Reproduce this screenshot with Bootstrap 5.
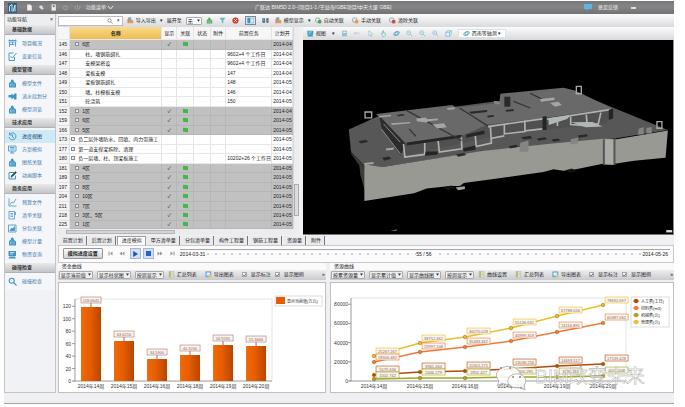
<!DOCTYPE html>
<html lang="zh-CN">
<head>
<meta charset="utf-8">
<meta name="viewport" content="width=device-width, initial-scale=1">
<title>广联达 BIM5D 2.0</title>
<link href="https://cdn.jsdelivr.net/npm/bootstrap@5.3.0/dist/css/bootstrap.min.css" rel="stylesheet">
<style>
body{font:5px/7px "Liberation Sans","Noto Sans CJK SC",sans-serif;color:#222;background:#fff}
svg{display:block;flex:none}
button,select,input{font:inherit;color:inherit}
.app{margin:1px 11px 0 4px;background:#f0f0f2;border-bottom:1px solid #a5a5a8;white-space:nowrap}
.titlebar{height:13px;background:linear-gradient(#777,#858587 40%,#727274);color:#eee;padding:0 38px 0 4px;gap:5px}
.titlebar .caption{margin-left:137px}
.plain{background:none;border:0;padding:0;display:inline-flex;align-items:center;gap:2px}
.side{width:53px;background:#f1f2f5;border:1px solid #c3c5c9;border-top:0}
.side-title{height:11px;padding:0 2px;background:#eceef0}
.side h2{height:10px;margin:0;padding:0 7px;font:bold 5px/9px "Liberation Sans","Noto Sans CJK SC",sans-serif;color:#333;background:linear-gradient(#e9e9ea,#c4c5c8);border-bottom:1px solid #b2b3b6}
.side ul{padding:2px 0;margin:0;background:#f4f6fa}
.side li a{height:13px;padding-left:3px;gap:5px;color:#477ca8;text-decoration:none}
.side li a.on{background:#cdeaf6;color:#173f66}
.side svg{width:9px;height:9px;color:#3c95c6}
.ico{width:7px;height:7px}
.main-area{min-width:0;padding-left:2px}
.toolbar{height:13px;background:linear-gradient(#fbfbfb,#d9dadd);padding-right:4px}
.gap-6px{gap:6px}
.find{width:65px;height:10px;background:#fff;border:1px solid #b9bbc0}
.find input{width:48px;border:0;padding:0;outline:0}
.drop{height:8px;padding:0 4px 0 1px;font-size:5px;line-height:6px;border:1px solid #a9abb0;border-radius:1px;color:#222;background-color:#eee;
 background-image:url("data:image/svg+xml,%3csvg xmlns='http://www.w3.org/2000/svg' viewBox='0 0 4 3'%3e%3cpath d='M0 0h4L2 3z' fill='%23333'/%3e%3c/svg%3e");background-size:3px 3px;background-position:right 1px center;background-repeat:no-repeat}
.w5{width:34px}.w4{width:29px}.w1{width:16px;background-color:#fff}
.pressed{border:1px solid #7e8795;background:#d3e3ef;padding:0 1px}
.plan{width:241px;background:#fff}
.plan table{width:235px;table-layout:fixed;border-collapse:collapse}
.plan th,.plan td{padding:0 1px;overflow:hidden;border-right:1px solid #e3e4e7;border-bottom:1px solid #e8e8ea;line-height:6px}
.plan th{height:12px;font-weight:400;text-align:center;background:#f6f6f7}
.plan th.hot{background:linear-gradient(#f9d98a,#eebd52);font-weight:700}
.plan tbody tr{height:10px}.plan tbody tr:nth-child(even){height:9px}.plan tbody tr:last-child{height:8px}
.plan tr.zone td{background:#c1c1c2;border-color:#b6b6b8}
.plan tr.zone td:first-child,.plan tr td:first-child{background:#f4f4f5;border-color:#e0e0e2}
.lv0{padding-left:1px!important}.lv1{padding-left:5px!important}.lv2{padding-left:15px!important}
.box{display:inline-block;width:4px;height:4px;border:1px solid #8b8d90;background:#eee;margin-right:3px}
.flag{display:inline-block;width:5px;height:4px;background:#45b54c;transform:skewY(8deg)}
.vbar{width:6px;background:#ececee;border-left:1px solid #d8d8da}
.vbar i{height:32px;border:1px solid #aaa;background:#dcdcde;margin-bottom:13px}
.hbar{height:6px;background:#ececee;padding:1px 67px 1px 8px}
.hbar i{display:block;height:4px;width:109px;background:#d3d3d6;border:1px solid #b5b5b8}
.scene{background:#000;min-height:0;border-right:1px solid #8d8b92;border-bottom:1px solid #77747c}
.scene svg{width:100%}
.tabs{padding:1px 0 0 1px;height:10px}
.tabs button{height:9px;padding:0 3px 0 4px;margin-right:1px;background:#ebebed;border:0;border-right:1px solid #777}
.tabs button.active{background:#fff;border:1px solid #9c9ca0;border-bottom:0}
.player{height:18px;background:#fbfbfc;border:1px solid #c7c7cc;padding:0 3px 0 4px;gap:3px}
.player .setup{height:11px;padding:0 4px;background:linear-gradient(#fafafa,#d2d2d5);border:1px solid #96979c;border-radius:1px;font-weight:700}
.player .key{width:9px;height:9px;display:flex;align-items:center;justify-content:center;border:0;padding:0;background:none}
.player .key.hl{background:#d3dff2;border:1px solid #a9b8d2;width:11px;height:11px;margin:0 -1px 0 0}
.track{border-top:1px solid #a7a7ab;height:10px;padding-top:1px;background:radial-gradient(circle,#d0d0d0 0 1px,transparent 1px) 0 0/8px 8px}
.track span{background:#fbfbfc;padding-right:2px}
.pane-name{height:7px;padding-left:4px;background:#fafafb;line-height:6px}
.chart-tools{height:10px;margin-bottom:2px;background:linear-gradient(#eeeeef,#c9cace);padding:0 1px}
.chart-box{background:#fff;border:1px solid #bebec3}
.chart-box svg{width:100%}
.tick{width:5px;height:5px;margin:0;border:1px solid #a5a5aa;border-radius:0;appearance:none;background:#fff}
.tick:checked{background:#fff url("data:image/svg+xml,%3csvg xmlns='http://www.w3.org/2000/svg' viewBox='0 0 6 6'%3e%3cpath d='M1 3l1.500 2L5 1' fill='none' stroke='%23333'/%3e%3c/svg%3e") center/4px no-repeat}
.lane-a{flex:268 1 0;min-width:0}.lane-b{flex:344 1 0;min-width:0}
.foot{height:10px}
svg text{font-family:"Liberation Sans","Noto Sans CJK SC",sans-serif}
</style>
<script src="https://cdn.jsdelivr.net/npm/bootstrap@5.3.0/dist/js/bootstrap.bundle.min.js"></script>
</head>
<body>
<svg width="0" height="0" class="position-absolute" aria-hidden="true"><defs>
<g id="i-plan" fill="none" stroke="currentColor" stroke-width="1.6"><path d="M1 3h16M1 6h16M3 6v10M9 6v6M15 6v9M3 11h10"/><path d="M3 1v3M9 1v3M15 1v3"/></g>
<g id="i-edit" fill="none" stroke="currentColor" stroke-width="1.8"><path d="M13 10v7H2V2h9"/><path d="M5 8l4 4 8-10"/></g>
<g id="i-model"><path d="M2 8l4-3V2l4-1 2 5 4 3v8H2z" fill="currentColor"/><path d="M5 9v6M8 7v8M12 9v6" stroke="#d7effa"/></g>
<g id="i-flow"><path d="M1 6h6V3l5 4V3h5v12h-5v-4l-5 4v-4H1z" fill="currentColor"/></g>
<g id="i-clock" fill="none" stroke="currentColor" stroke-width="1.8"><path d="M3 5a7 7 0 1 1-1 5M3 1v5h5M9 5v5l3 2"/></g>
<g id="i-screen" fill="none" stroke="currentColor" stroke-width="1.7"><path d="M1 2h15v10H1zM4 5h9M4 8h9M8 12v4M4 16h9"/></g>
<g id="i-pen" fill="none" stroke="currentColor" stroke-width="2"><path d="M12 3H2v13h13V9"/><path d="M6 13l1-4 8-8 2 2-8 8z" fill="#26465f" stroke="#26465f" stroke-width="1"/></g>
<g id="i-line" fill="none" stroke="currentColor" stroke-width="1.6"><path d="M2 1v15h15M4 13l4-5 3 2 5-8"/></g>
<g id="i-list" fill="none" stroke="currentColor" stroke-width="1.5"><path d="M2 1h11v15H2zM5 5h5M5 8h5M5 11h5M15 2v6"/></g>
<g id="i-part" fill="none" stroke="currentColor" stroke-width="1.6"><path d="M1 2h15v14H1z"/><path d="M4 13l4-5 2 2 3-5v8z" fill="currentColor"/></g>
<g id="i-pc"><path d="M1 2h15v10H1zM3 13h11l2 4H1z" fill="currentColor"/><path d="M4 5h9M4 8h6" stroke="#e4f4fc" stroke-width="1.5"/></g>
<g id="i-search" fill="none" stroke="currentColor" stroke-width="2.2"><circle cx="7.500" cy="7.500" r="5"/><path d="M11 11l6 6"/></g>
<g id="i-sheet"><path d="M3 1h12v15H3z" fill="#f4efd0" stroke="#9a9878"/><path d="M3 1h5v15H3z" fill="#b3bd74"/><path d="M9 5h5M9 8h5M9 11h5" stroke="#5c9ed0"/></g>
<g id="i-out"><path d="M1 1h15v15H1z" fill="#60a7dc"/><path d="M4 4h9v8H4z" fill="#e3f3ff"/><path d="M9 9h8v7H9z" fill="#e9c46b"/></g>
<g id="i-link"><circle cx="7" cy="8" r="6" fill="#dfe9ef" stroke="#6a8697" stroke-width="1.5"/><circle cx="12" cy="12" r="5" fill="currentColor"/></g>
<g id="i-io"><path d="M3 1h8v10H3z" fill="#66a5cf"/><path d="M6 8h10v8H6z" fill="#e4984c"/><path d="M1 5h5v11H1z" fill="#df8a55"/></g>
<g id="i-hand" fill="#dff3f6" stroke="#54a5b8" stroke-width="1.4"><path d="M4 8l3 1V2h2v5l5 1v5l-3 4H7z"/></g>
<g id="i-arrow" fill="#f4fbfc" stroke="#6ab0c0" stroke-width="1.4"><path d="M5 2l9 8-4 1 2 5-3 1-2-5-2 2z"/></g>
<g id="i-undo" fill="none" stroke="#bcc3c8" stroke-width="2"><path d="M2 10a8 7 0 0 1 14 2M2 5v5h5"/></g>
<g id="i-stand" fill="none" stroke="#6aafc4" stroke-width="1.8"><path d="M4 3h10v6H4zM2 15h14M5 9v6M13 9v6M5 12h8"/></g>
<g id="i-cube" fill="#dff3f6" stroke="#5aa5bd" stroke-width="1.4"><path d="M2 6l4-4h10v9l-4 5H2zM2 6h10v10M12 6l4-4"/></g>
<g id="i-zoom" fill="#e9f7fa" stroke="#58a4bd" stroke-width="1.4"><circle cx="7" cy="7" r="5"/><path d="M11 11l5 5M5 7h4"/></g>
<g id="i-orbit" fill="none" stroke="#4ba0b8" stroke-width="1.8"><ellipse cx="9" cy="9" rx="8" ry="4" transform="rotate(-25 9 9)"/><path d="M6 5h7l-1 8H5z"/></g>
</defs></svg>

<div class="app d-flex flex-column">
 <header class="titlebar d-flex align-items-center">
  <svg width="9" height="10" viewBox="0 0 18 20"><path d="M0 0h18v20H0z" fill="#2d6284"/><path d="M3 17V6l5-3v14M10 17l4-13v13" stroke="#c8e8f5" stroke-width="2" fill="none"/></svg>
  <button class="plain ms-1" aria-label="新建"><svg class="ico" viewBox="0 0 18 18"><path d="M3 1h8l4 4v12H3z" fill="#eee"/></svg></button>
  <button class="plain" aria-label="打开"><svg class="ico" viewBox="0 0 18 18"><path d="M3 5l6-2 6 9-4 3-7-5z" fill="#ddd"/></svg></button>
  <button class="plain" aria-label="保存"><svg class="ico" viewBox="0 0 18 18"><path d="M4 1h11v16H4z" fill="#eee"/><path d="M7 3h5v5H7z" fill="#777"/></svg></button>
  <button class="plain" aria-label="撤销"><svg class="ico" viewBox="0 0 18 18"><circle cx="9" cy="10" r="5" fill="none" stroke="#aaa" stroke-width="2"/></svg></button>
  <button class="plain" aria-label="重做"><svg class="ico" viewBox="0 0 18 18"><path d="M4 5a6 6 0 1 0 10 0M9 2v8" fill="none" stroke="#aaa" stroke-width="2"/></svg></button>
  <button class="plain">功能菜单 <svg width="5" height="4" viewBox="0 0 5 4"><path d="M0 0l2.500 3L5 0" fill="none" stroke="#eee"/></svg></button>
  <span class="caption">广联达 BIM5D 2.0--[项目1-1 /王益海/GBE项目/中天大厦 GBE]</span>
  <button class="plain ms-auto"><svg width="8" height="7" viewBox="0 0 16 14"><path d="M0 0h16v10H9l-4 4v-4H0z" fill="#5eb4e2"/></svg><span class="ms-1">意见反馈</span></button>
  <button class="plain ms-2" aria-label="最小化"><svg width="5" height="2"><path d="M0 0h5v2H0z" fill="#ddd"/></svg></button>
 </header>
 <div class="d-flex">
  <nav class="side" id="side"><div class="side-title d-flex align-items-center justify-content-between"><span>功能导航</span><button class="plain" aria-label="关闭">×</button></div></nav>
  <main class="main-area flex-grow-1">
   <div class="toolbar d-flex align-items-center">
    <div class="find d-flex align-items-center"><input aria-label="搜索"><svg width="6" height="6" viewBox="0 0 18 18" color="#777"><use href="#i-search"/></svg><span class="ms-1">×</span></div>
    <button class="plain ms-1"><svg class="ico" viewBox="0 0 18 18"><use href="#i-io"/></svg>导入导出</button><span class="ms-1">▾</span>
    <label class="ms-1" for="lvl">展开至</label><select id="lvl" class="form-select drop w1 mx-1"><option>无</option></select>
    <div class="d-flex align-items-center gap-6px">
     <button class="plain" aria-label="模型"><svg class="ico" viewBox="0 0 18 18" color="#4fae59"><use href="#i-model"/></svg></button>
     <button class="plain" aria-label="筛选"><svg class="ico" viewBox="0 0 18 18"><path d="M1 2h16l-6 7v8l-4-3V9z" fill="#5dbfbd"/></svg></button>
     <button class="plain" aria-label="取消"><svg class="ico" viewBox="0 0 18 18"><circle cx="9" cy="9" r="8" fill="#d13c36"/><path d="M6 6l6 6M12 6l-6 6" stroke="#fff" stroke-width="2.500"/></svg></button>
     <button class="plain pressed" aria-label="关联视图"><svg class="ico" viewBox="0 0 18 18"><path d="M1 2h7v14H1z" fill="#3c98b5"/><path d="M10 3h7v12h-7z" fill="#eef" stroke="#58a"/></svg></button>
     <button class="plain" aria-label="分栏"><svg class="ico" viewBox="0 0 18 18"><path d="M1 3h7v12H1zM11 3h6v12h-6z" fill="#506a82"/><path d="M3 6h3M3 9h3M13 9h3" stroke="#fff"/></svg></button>
     <button class="plain"><svg class="ico" viewBox="0 0 18 18"><use href="#i-io"/></svg>模型显示</button>
    </div><span class="ms-1">▾</span>
    <button class="plain ms-1"><svg class="ico" viewBox="0 0 18 18" color="#46a957"><use href="#i-link"/></svg>自动关联</button>
    <button class="plain ms-2"><svg class="ico" viewBox="0 0 18 18" color="#e0a148"><use href="#i-link"/></svg>手动关联</button>
    <button class="plain ms-2"><svg class="ico" viewBox="0 0 18 18" color="#cf4d43"><use href="#i-link"/></svg>清除关联</button>
   </div>
   <div class="d-flex">
    <section class="plan flex-shrink-0">
     <div class="d-flex">
      <table><colgroup><col width="12"><col width="92"><col width="15"><col width="17"><col width="17"><col width="15"><col width="46"><col width="21"></colgroup>
       <thead><tr><th></th><th class="hot">名称</th><th>显示</th><th>关联</th><th>状态</th><th>附件</th><th>前置任务</th><th>计划开</th></tr></thead><tbody id="rows"></tbody></table>
      <div class="vbar d-flex flex-column justify-content-end"><i></i></div>
     </div>
     <div class="hbar"><i></i></div>
    </section>
    <section class="flex-grow-1 ms-1 d-flex flex-column overflow-hidden">
     <div class="toolbar d-flex align-items-center gap-6px ps-1" id="viewtools">
      <button class="plain"><svg class="ico" viewBox="0 0 18 18" color="#3c98b5"><use href="#i-pc"/></svg>视图</button><span>▾</span>
     </div>
     <div class="scene d-flex align-items-center flex-grow-1">
      <svg viewBox="5 -60 1116 580" role="img" aria-label="建筑模型">
       <path d="M143 207L228 168 600 120 800 84 1105 208 945 234 540 274 245 320 190 316 150 275z" fill="#575757"/>
       <path d="M143 207l8 70 39 40 10 103-22-75-3-30-25-35z" fill="#3b3b3b"/>
       <path d="M190 312l55 8 295-48 210-22 160-15 40 1 155-26-7 82-95 9-53 8-26-2-96 20-38 4-30-4-30 8-240 33-12 9h-30l-70 8-38 14-150 23z" fill="#999994"/>
       <path d="M914 237h28l3 77-35-2z" fill="#aaaaa6"/><path d="M912 236v76M944 234v80" stroke="#555" stroke-width="6"/>
       <path d="M428 381l25-5 12 8-25 6zM796 330l20-6 12 9-18 5z" fill="#111"/>
       <path d="M225 160l230-27 12 8 130-14 3-28 190-18 35 8 115 55-210 28-170 20-70 32-175 25z" fill="#696969"/>
       <path d="M235 165l80 85-15 36-58-82z" fill="#2c2c2c"/>
       <path d="M241 205l60 78M248 190l50 55" stroke="#8a8a8a" stroke-width="3"/>
       <path d="M315 248l175-24 70-30 170-22 205-28-15 45-190 18-165 25-145 30-110 25z" fill="#505050"/>
       <g fill="none" stroke="#b1b1ae" stroke-width="5"><path d="M308 250l4 40 60-8v-35M412 237l4 38 68-10-2-38M524 218l3 40 46-10-3-50M563 198l168-24M612 192v28l62-7v-34M674 211l53-6M570 234l42-8M740 176l195-30M772 174v22M812 168v24l50 4-3-34M865 194l30-4 8-34"/></g>
       <path d="M745 173l68-10-12 12-55 18zM813 185l45 15 50-2-30-14z" fill="#b0b8b5"/>
       <path d="M727 168l12-2v42h-12zM927 147l13-4v30l-13 5zM318 246l165-23v8l-165 24zM375 273h38l-4 10-37 3zM487 263l38-8v13l-35 5zM497 222l55-12v10l-55 12z" fill="#252525"/>
       <path d="M172 242l22-4 8 6-22 5zM244 292l20-4 8 7-22 6zM466 282l25-4 6 6-24 5zM625 257l23-4 6 6-24 5zM663 230l28-4 5 8-27 3zM710 234l25-4 6 6-26 5zM754 237l20-3 8 6-22 4zM833 225l27-4 5 6-27 5zM505 153l55-5v6l-48 5zM560 165l20-2v5l-18 3zM615 148l25-3v6l-22 2zM287 163l20-3 5 4-18 3z" fill="#292929"/>
       <path d="M318 150l165 90M477 142l85 54M690 98l45 22M325 205l20 22M640 122l50 20" stroke="#353535" stroke-width="4"/>
       <path d="M612 108h18v30h-18z" fill="#292929"/>
       <path d="M347 174l27-3 6 5 32-2v5l-28 3-8 4-28-4zM395 192l35-4 8 12-28 4zM718 115l45-5v8l-40 5zM750 127l25-4 10 10-20 5zM255 264l25-3-3 7-22 2zM270 188l58-4v4l-55 5zM234 166l36-4v5l-35 4zM440 142l25-2-5 6-20 1zM190 308l28-3v6l-28 3zM465 382l28-4v8l-20 4zM268 512l20-4v3z" fill="#a5a5a2"/>
       <path d="M192 154h20v18h-20zM829 77h15v22h-15zM1072 183h15v20h-15z" fill="none" stroke="#aaa" stroke-width="4"/>
       <path d="M660 247l25-7v34h-27zM812 236l22-5v18l-24 3zM1018 204l14-4v22h-18zM1040 202l16-3v20h-16zM580 120l18 3v8h-15z" fill="#858582"/>
       <path d="M1100 510h18v7h-18z" fill="#ddd"/>
      </svg>
     </div>
    </section>
   </div>
   <div class="tabs d-flex"><button>前置计划</button><button>后置计划</button><button class="active">进度模拟</button><button>甲方清单量</button><button>分包清单量</button><button>构件工程量</button><button>钢筋工程量</button><button>资源量</button><button>附件</button></div>
   <div class="player d-flex align-items-center">
    <button class="setup">模拟进度设置</button>
    <button class="key" aria-label="首帧"><svg width="5" height="5" viewBox="0 0 10 10"><path d="M1 1h2v8H1zM9 1v8L4 5z" fill="#999"/></svg></button>
    <button class="key" aria-label="后退"><svg width="6" height="5" viewBox="0 0 12 10"><path d="M6 1v8L1 5zM11 1v8L6 5z" fill="#999"/></svg></button>
    <button class="key hl" aria-label="播放"><svg width="6" height="6" viewBox="0 0 10 10"><path d="M2 0v10l8-5z" fill="#1f51bd"/></svg></button>
    <button class="key hl" aria-label="停止"><svg width="5" height="5"><path d="M0 0h5v5H0z" fill="#2a5fc9"/></svg></button>
    <button class="key" aria-label="前进"><svg width="6" height="5" viewBox="0 0 12 10"><path d="M1 1v8l5-4zM6 1v8l5-4z" fill="#999"/></svg></button>
    <button class="key" aria-label="末帧"><svg width="5" height="5" viewBox="0 0 10 10"><path d="M7 1h2v8H7zM1 1v8l5-4z" fill="#999"/></svg></button>
    <div class="track flex-grow-1 d-flex justify-content-between"><span>2014-03-31</span><span>55 / 56</span><span>2014-05-26</span></div>
   </div>
   <div class="d-flex gap-1">
    <section class="lane-a"><div class="pane-name">资金曲线</div>
     <div class="chart-tools d-flex align-items-center">
      <select class="form-select drop w5" aria-label="数值"><option>显示当前值</option></select><select class="form-select drop w5 mx-1" aria-label="图形"><option>显示柱状图</option></select><select class="form-select drop w4" aria-label="周期"><option>按周显示</option></select>
      <button class="plain ms-1"><svg class="ico" viewBox="0 0 18 18"><use href="#i-sheet"/></svg>汇总列表</button>
      <button class="plain ms-2 me-2"><svg class="ico" viewBox="0 0 18 18"><use href="#i-out"/></svg>导出图表</button>
      <input class="tick me-1" type="checkbox" id="a1" checked><label for="a1">显示标注</label><input class="tick mx-1" type="checkbox" id="a2" checked><label for="a2">显示图例</label><span class="ms-auto">»</span>
     </div>
     <div class="chart-box"><svg id="bars" viewBox="59 283 266 109" role="img" aria-label="资金曲线"></svg></div>
    </section>
    <section class="lane-b"><div class="pane-name">资源曲线</div>
     <div class="chart-tools d-flex align-items-center">
      <select class="form-select drop w5" aria-label="资源"><option>按累资源量</option></select><select class="form-select drop w5 mx-1" aria-label="数值"><option>显示累计值</option></select><select class="form-select drop w5 me-1" aria-label="图形"><option>显示曲线图</option></select><select class="form-select drop w4" aria-label="周期"><option>按周显示</option></select>
      <button class="plain ms-1"><svg class="ico" viewBox="0 0 18 18"><use href="#i-sheet"/></svg>曲线设置</button>
      <button class="plain mx-2"><svg class="ico" viewBox="0 0 18 18"><use href="#i-sheet"/></svg>汇总列表</button>
      <button class="plain me-2"><svg class="ico" viewBox="0 0 18 18"><use href="#i-out"/></svg>导出图表</button>
      <input class="tick me-1" type="checkbox" id="b1" checked><label for="b1">显示标注</label><input class="tick mx-1" type="checkbox" id="b2" checked><label for="b2">显示图例</label><span class="ms-auto">»</span>
     </div>
     <div class="chart-box"><svg id="lines" viewBox="330 283 342 109" role="img" aria-label="资源曲线"></svg></div>
    </section>
   </div>
  </main>
 </div>
 <footer class="foot"></footer>
</div>
<script>
const groups=[['基础数据',[['plan','项目概况'],['edit','变更信息']]],['模型管理',[['model','模型文件'],['flow','流水段划分'],['model','模型浏览']]],['技术应用',[['clock','进度视图'],['screen','方案模拟'],['model','图纸关联'],['pen','动画脚本']]],['商务应用',[['line','预算文件'],['list','清单关联'],['part','分包关联'],['model','模型计量'],['pc','物资查询']]],['碰撞检查',[['search','碰撞检查']]]];
document.getElementById('side').insertAdjacentHTML('beforeend',groups.map(([h,l])=>`<h2>${h}</h2><ul class="list-unstyled">${l.map(([i,t])=>`<li><a href="#" class="d-flex align-items-center${t=='进度视图'?' on':''}"><svg viewBox="0 0 18 18"><use href="#i-${i}"/></svg>${t}</a></li>`).join('')}</ul>`).join(''));

const rows=[[145,'6区',1,'','04'],[146,'柱、墙钢筋绑扎',2,'9602+4 个工作日','04'],[147,'支模架搭设',2,'9602+4 个工作日','04'],[148,'梁板支模',2,'147','04'],[149,'梁板钢筋绑扎',2,'148','05'],[150,'墙、柱模板支模',2,'146','04'],[151,'砼浇筑',2,'150','05'],[152,'1区',1,'','04'],[159,'6区',1,'','05'],[166,'5区',1,'','05'],[173,'负二层外墙防水、回填、肉力带施工',0,'','05'],[177,'第一道支撑梁拆除、清理',0,'','05'],[180,'负一层墙、柱、顶梁板施工',0,'10202+26 个工作日','05'],[181,'4区',1,'','05'],[189,'6区',1,'','05'],[197,'8区',1,'','05'],[204,'10区',1,'','05'],[211,'7区',1,'','05'],[218,'3区、5区',1,'','05'],[225,'1区',1,'','05']];
document.getElementById('rows').innerHTML=rows.map(([n,t,l,p,d])=>`<tr class="${l==1?'zone':''}"><td>${n}</td><td class="lv${l}">${l<2?'<span class="box"></span>':''}${t}</td><td class="text-center">${l==1?'✓':''}</td><td class="text-center">${l==1?'<span class="flag"></span>':''}</td><td></td><td></td><td>${p}</td><td>2014-${d}</td></tr>`).join('');

document.getElementById('viewtools').insertAdjacentHTML('beforeend',[['stand','标准'],['undo','返回'],['arrow','选择'],['hand','平移'],['orbit','旋转'],['zoom','放大'],['zoom','缩小'],['zoom','全图'],['cube','立方体']].map(([i,t])=>`<button class="plain" aria-label="${t}"><svg class="ico" viewBox="0 0 18 18"><use href="#i-${i}"/></svg></button>`).join('')+'<button class="plain bg-white border px-1"><svg class="ico" viewBox="0 0 18 18"><use href="#i-orbit"/></svg>西南等轴测 ▾</button>');

const T=(x,y,s,a='middle',c='#333',z=5)=>`<text x="${x}" y="${y}" font-size="${z}" text-anchor="${a}" fill="${c}">${s}</text>`;
const L=(x1,y1,x2,y2,c='#999')=>`<path d="M${x1} ${y1}L${x2} ${y2}" stroke="${c}" fill="none"/>`;
const tag=(x,y,w,s,c)=>`<rect x="${x}" y="${y}" width="${w}" height="6" fill="#fbf5ee" stroke="${c}" stroke-width=".6"/>`+T(x+w/2,y+5,s,'middle','#866',4);
let g='<defs><linearGradient id="og"><stop offset="0" stop-color="#f06a08"/><stop offset=".45" stop-color="#e65c00"/><stop offset="1" stop-color="#b84600"/></linearGradient></defs><path d="M75 299H272V381" fill="none" stroke="#e4e4e4"/>'+L(75,299,75,381)+L(73,381,272,381);
[0,20,40,60,80,100,120].forEach(v=>{const y=381-v*.623;g+=L(72,y,75,y)+T(71,y+2,v,'end')});
[[91,307,'118.6645',14],[124,341,'63.6216',15],[157,359,'34.5900',16],[190,355,'40.3240',18],[223,345,'56.9265',19],[256,346,'55.3666',20]].forEach(([x,y,v,w])=>{g+=`<rect x="${x-10}" y="${y}" width="20" height="${381-y}" fill="url(#og)"/>`+L(x,y-4,x,y,'#a66')+tag(x-10,y-10,20,v,'#a77')+T(x,388,`2014年${w}周`)});
g+='<path d="M275 296h47v10h-47z" fill="#fff" stroke="#ddd"/><path d="M276 297h9v7h-9z" fill="#e65c00"/>'+T(287,303,'显示当前值(万元)','start','#222',4);
document.getElementById('bars').innerHTML=g;

g='<path d="M350 298H625V381" fill="none" stroke="#e4e4e4"/>'+L(350,298,350,381)+L(348,381,625,381);
[0,20000,40000,60000,80000].forEach((v,i)=>{const y=381-i*19.2;g+=L(347,y,350,y)+T(347,y+2,v,'end')});
const xs=[373,419,464,510,556,602];
const series=[['#e9be2c',[356,343,337,328,316,305],[348,335,328,319,307,297],['25267.267','38752.462','46270.028','55136.631','67788.034','78692.697']],['#ee7b3b',[362,352,347,341,332,323],[354,343,338,332,322,314],['18306.482','29997.108','35483.462','40999.303','51116.895','60387.062']],['#b24a0c',[375,372,371,369,366,364],[366,363,362,359,357,355],['5579.636','8361.464','10301.271','13038.256','14693.517','17539.428']],['#9caa1d',[379,378,378,377,377,376],[372,369,369,368,368,367],['1502.742','2406.279','2852.427','3300.285','3735.361','4274.838']]];
series.forEach(([c,p])=>{g+=`<path d="M${xs.map((x,i)=>x+' '+p[i]).join('L')}" stroke="${c}" stroke-width="1.500" fill="none"/>`+xs.map((x,i)=>`<circle cx="${x}" cy="${p[i]}" r="1.800" fill="${c}" stroke="#955d10" stroke-width=".5"/>`).join('')});
series.forEach(([c,p,q,v])=>xs.forEach((x,i)=>g+=tag(x+2,q[i],23,v[i],c)));
[14,15,16,18,19,20].forEach((w,i)=>g+=T(xs[i],388,`2014年${w}周`));
g+='<path d="M630 297h38v30h-38z" fill="#fff" stroke="#ddd"/>';
[['#b24a0c','人工费(工日)'],['#ee7b3b','材料费(m3)'],['#9caa1d','机械费(元)'],['#e9be2c','管理费(元)']].forEach(([c,t],i)=>{const y=301+i*7;g+=L(632,y,638,y,c)+`<circle cx="635" cy="${y}" r="2.200" fill="${c}"/>`+T(640,y+2,t,'start','#222',4)});
g+='<g stroke="#999" stroke-width=".7" fill="#fff" fill-opacity=".85"><path d="M498 381l-2 5 5-3a12 9 0 1 0-3-2z"/><path d="M520 387l4 3-1-5a9 7 0 1 0-3 2z"/></g><g fill="#888"><circle cx="500" cy="368" r="1"/><circle cx="509" cy="368" r="1"/><circle cx="512" cy="377" r="1"/><circle cx="519" cy="377" r="1"/></g><text x="534" y="383" font-size="19" fill="#fff" fill-opacity=".7" stroke="#9a9a9a" stroke-width=".4">BIM改变未来</text>';
document.getElementById('lines').innerHTML=g;
</script>
</body>
</html>
